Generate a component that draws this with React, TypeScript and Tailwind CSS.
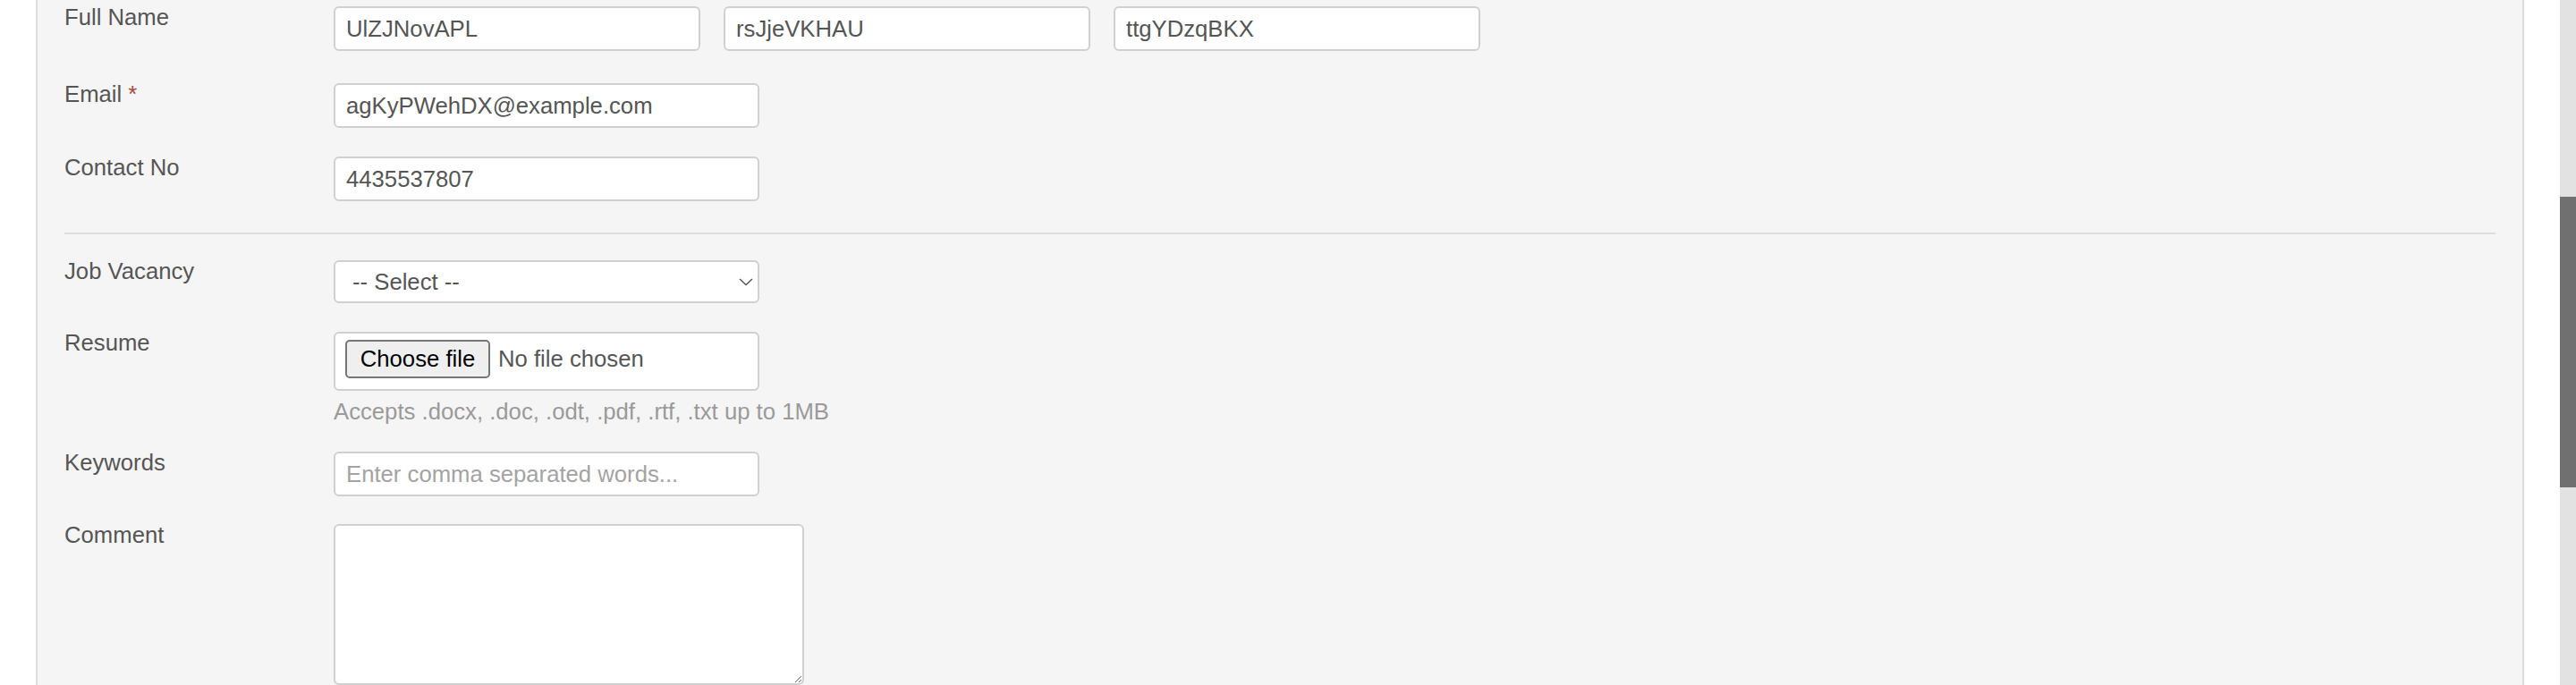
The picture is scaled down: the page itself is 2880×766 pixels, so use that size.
import React from "react";

const labelCls = "-mt-[3px] w-[301px] shrink-0 leading-[30px] text-[#555555]";
const inputCls =
  "h-[50px] rounded-[6px] border-2 border-[#d0d0d0] bg-white pl-[12px] text-[25.7px] text-[#555555] outline-none placeholder:text-[#a3a3a3]";

function Row({
  label,
  required,
  className,
  children,
}: {
  label: string;
  required?: boolean;
  className?: string;
  children: React.ReactNode;
}) {
  return (
    <div className={`flex items-start ${className ?? ""}`}>
      <label className={labelCls}>
        {label}
        {required && <span className="text-[#a94442]"> *</span>}
      </label>
      <div className="flex flex-col">{children}</div>
    </div>
  );
}

export default function App() {
  return (
    <div className="flex h-[766px] w-full overflow-hidden bg-white font-['Liberation_Sans',Arial,sans-serif] text-[25.7px]">
      <div className="flex-1 px-[40px]">
        <div className="h-full border-x-2 border-[#dddddd] bg-[#f5f5f5] px-[30px] pt-[7px]">
          {/* personal details */}
          <Row label="Full Name">
            <div className="flex gap-[26px]">
              <input className={`${inputCls} w-[410px]`} value="UlZJNovAPL" readOnly />
              <input className={`${inputCls} w-[410px]`} value="rsJjeVKHAU" readOnly />
              <input className={`${inputCls} w-[410px]`} value="ttgYDzqBKX" readOnly />
            </div>
          </Row>

          <Row label="Email" required className="mt-[36px]">
            <input className={`${inputCls} w-[476px]`} value="agKyPWehDX@example.com" readOnly />
          </Row>

          <Row label="Contact No" className="mt-[32px]">
            <input className={`${inputCls} w-[476px]`} value="4435537807" readOnly />
          </Row>

          <hr className="mt-[35px] h-[2px] border-0 bg-[#dddddd]" />

          {/* application */}
          <Row label="Job Vacancy" className="mt-[29px]">
            <div className="relative w-[476px]">
              <select className="h-[48px] w-full appearance-none rounded-[6px] border-2 border-[#d0d0d0] bg-white pl-[19px] text-[25.7px] text-[#555555] outline-none">
                <option>-- Select --</option>
              </select>
              <svg
                className="pointer-events-none absolute right-[7px] top-[20px]"
                width="16"
                height="9"
                viewBox="0 0 16 9"
                fill="none"
              >
                <path d="M1 1 L8 7.5 L15 1" stroke="#555555" strokeWidth="1.4" />
              </svg>
            </div>
          </Row>

          <Row label="Resume" className="mt-[32px]">
            <div className="flex h-[66px] w-[476px] items-start rounded-[6px] border-2 border-[#d0d0d0] bg-white pl-[11px] pt-[7px]">
              <span className="flex h-[43px] w-[162px] items-center justify-center rounded-[5px] border-2 border-[#767676] bg-[#efefef] text-black">
                Choose file
              </span>
              <span className="ml-[9px] mt-[3px] leading-[36px] text-[#555555]">No file chosen</span>
            </div>
            <p className="mt-[5px] leading-[36px] text-[#9a9a9a]">
              Accepts .docx, .doc, .odt, .pdf, .rtf, .txt up to 1MB
            </p>
          </Row>

          <Row label="Keywords" className="mt-[27px]">
            <input className={`${inputCls} w-[476px]`} placeholder="Enter comma separated words..." />
          </Row>

          <Row label="Comment" className="mt-[31px]">
            <textarea className="h-[180px] w-[526px] rounded-[6px] border-2 border-[#d0d0d0] bg-white p-[12px] text-[25.7px] text-[#555555] outline-none" />
          </Row>
        </div>
      </div>

      {/* scrollbar */}
      <div className="w-[18px] shrink-0 bg-[#e2e2e2]">
        <div className="mt-[220px] h-[325px] bg-[#707070]" />
      </div>
    </div>
  );
}
